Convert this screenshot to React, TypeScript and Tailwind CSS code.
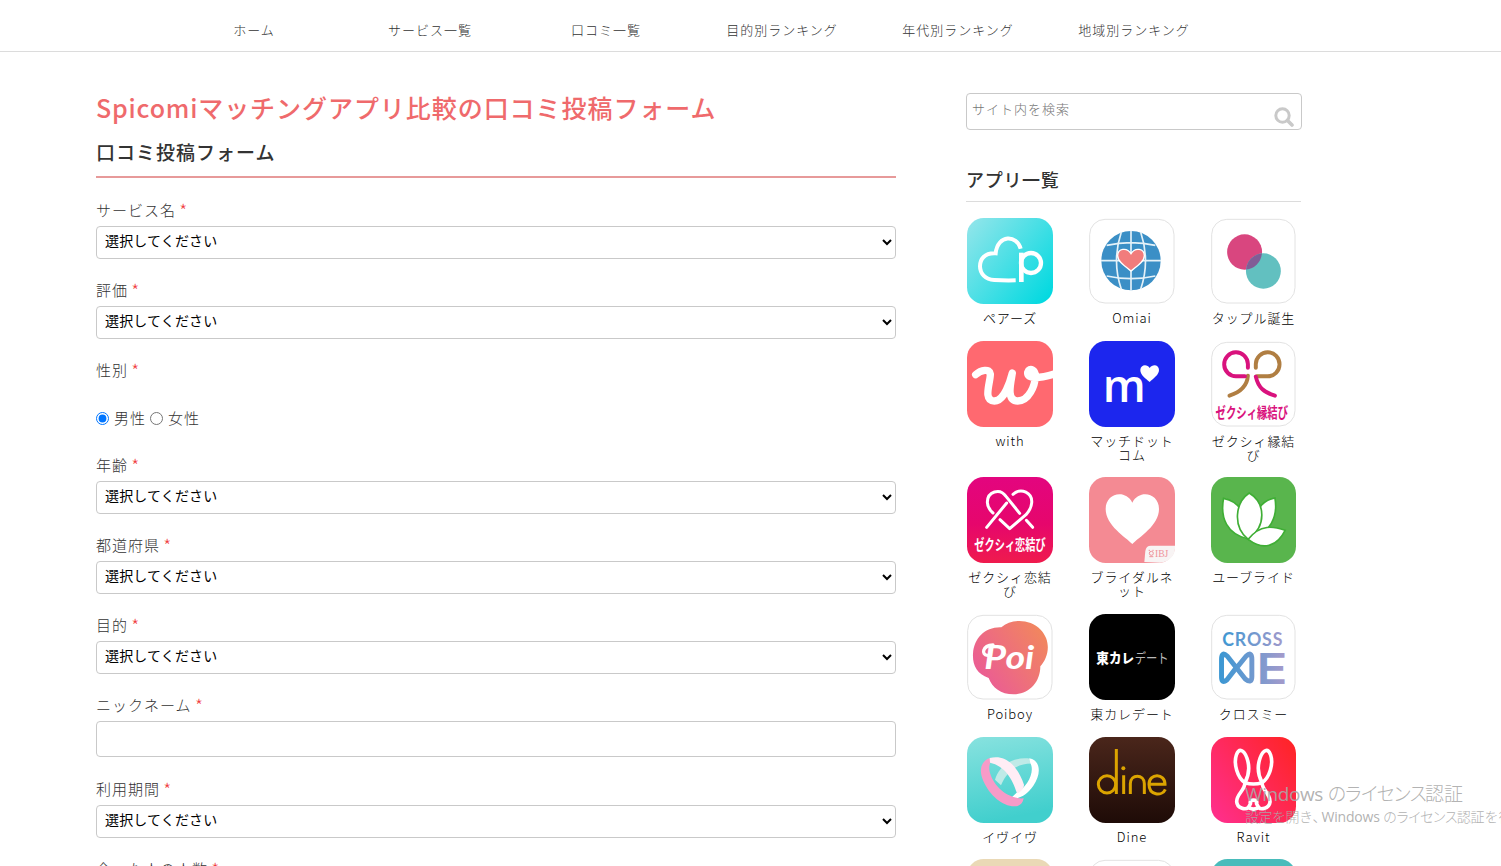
import type { ReactNode } from "react";

const navItems = [
  "ホーム",
  "サービス一覧",
  "口コミ一覧",
  "目的別ランキング",
  "年代別ランキング",
  "地域別ランキング",
];

const JP = "'Noto Sans CJK JP', sans-serif";
const HEART = "M0 34 C-16 22 -40 6 -40 -12 C-40 -34 -12 -38 0 -18 C12 -38 40 -34 40 -12 C40 6 16 22 0 34Z";

/* Each icon is drawn on a 258 x 258 tile. */
function Tile({ children, fill = "#fff", outlined = false }: { children?: ReactNode; fill?: string; outlined?: boolean }) {
  return (
    <svg viewBox="0 0 258 258" preserveAspectRatio="none" className="block h-[86px] w-full" fill="none">
      {outlined ? (
        <rect x="2" y="4" width="253" height="251" rx="46" fill="#fff" stroke="#e2e2e2" strokeWidth="3" />
      ) : (
        <rect width="258" height="258" rx="50" fill={fill} />
      )}
      {children}
    </svg>
  );
}

function Pairs() {
  return (
    <Tile fill="url(#pairs)">
      <defs>
        <linearGradient id="pairs" x1="0" y1="0.1" x2="1" y2="0.9">
          <stop offset="0" stopColor="#8fe5ea" />
          <stop offset="1" stopColor="#00d9e0" />
        </linearGradient>
      </defs>
      <path d="M161 92 C150 50 92 48 86 106 C52 104 39 124 39 145 C39 166 54 184 82 186 Q114 188 146 187" stroke="#fff" strokeWidth="12" />
      <path d="M163 104V192" stroke="#fff" strokeWidth="14" />
      <circle cx="192" cy="135" r="30" stroke="#fff" strokeWidth="13" />
    </Tile>
  );
}

function Omiai() {
  return (
    <Tile outlined>
      <circle cx="126" cy="128" r="89" fill="#3b8fc6" />
      <g stroke="#e4f1f8" strokeWidth="5">
        <path d="M126 38V218M36 128H216M53 82Q126 66 199 82M53 174Q126 190 199 174" />
        <path d="M97 42Q68 128 97 214M155 42Q184 128 155 214" />
      </g>
      <path d={HEART} transform="translate(126 125)" fill="#f17c7c" stroke="#fff" strokeWidth="4" />
    </Tile>
  );
}

function Tapple() {
  return (
    <Tile outlined>
      <circle cx="102" cy="102" r="53" fill="#d9467f" />
      <circle cx="159" cy="159" r="53" fill="#62c0c0" />
      <path d="M106.500 154.500A53 53 0 0 1 154.500 106.500A53 53 0 0 1 106.500 154.500Z" fill="#815c96" />
    </Tile>
  );
}

function With() {
  return (
    <Tile fill="#ff6970">
      <path
        d="M26 101 C42 86 68 82 70 99 C71 122 46 180 82 180 C112 180 130 120 136 96 C132 124 116 180 152 180 C186 180 204 134 205 106 C206 88 188 76 182 94 C180 116 220 112 262 99"
        stroke="#fff"
        strokeWidth="22"
        strokeLinecap="round"
        strokeLinejoin="round"
      />
    </Tile>
  );
}

function Match() {
  return (
    <Tile fill="#1c26ee">
      <text x="41" y="183" textLength="129" lengthAdjust="spacingAndGlyphs" fontFamily="Open Sans" fontWeight="600" fontSize="137" fill="#fff">m</text>
      <path d="M182 123 C170 112 153 101 154 86 C155 70 175 68 182 81 C190 68 210 70 210 87 C210 101 194 112 182 123Z" fill="#fff" />
    </Tile>
  );
}

function ZexyEn() {
  return (
    <Tile outlined>
      <g strokeWidth="12" strokeLinecap="round">
        <path d="M112 104 C110 132 94 152 56 164" stroke="#b07e42" />
        <path d="M136 80V69A36 36 0 1 1 172 106H139" stroke="#b07e42" />
        <path d="M112 80V69A36 36 0 1 0 77 106H103" stroke="#d9127d" />
        <path d="M136 107 C144 142 162 154 194 164" stroke="#d9127d" />
      </g>
      <text x="14" y="232" textLength="220" lengthAdjust="spacingAndGlyphs" fontFamily={JP} fontWeight="700" fontSize="44" fill="#d9127d">ゼクシィ縁結び</text>
    </Tile>
  );
}

function ZexyKoi() {
  return (
    <Tile fill="url(#koi)">
      <defs>
        <linearGradient id="koi" x1="0" y1="0" x2="0" y2="1">
          <stop offset="0" stopColor="#e3057f" />
          <stop offset="0.55" stopColor="#e6066c" />
          <stop offset="1" stopColor="#ef1b4d" />
        </linearGradient>
      </defs>
      <g stroke="#fff" strokeWidth="9" strokeLinecap="round" strokeLinejoin="round">
        <path d="M59 151 L119 78" />
        <path d="M138 52 C163 30 197 48 194 78 C193 92 186 103 177 113 L128 155 L99 128" />
        <path d="M158 109 L117 58 C99 32 61 43 61 76 C61 91 70 101 78 108" />
        <path d="M178 130 L197 151" />
      </g>
      <text x="22" y="219" textLength="214" lengthAdjust="spacingAndGlyphs" fontFamily={JP} fontWeight="700" fontSize="44" fill="#fff">ゼクシィ恋結び</text>
    </Tile>
  );
}

function Bridal() {
  return (
    <Tile fill="#f48a93">
      <path d="M130 201 C110 180 50 146 50 96 C50 48 109 36 130 77 C151 36 210 48 210 96 C210 146 150 180 130 201Z" fill="#fff" />
      <path d="M166 255 L169 222 Q171 206 186 206 H258V215 C257 240 235 256 212 257Z" fill="#f8f4f4" />
      <text x="198" y="239" textLength="40" lengthAdjust="spacingAndGlyphs" fontFamily="Liberation Serif" fontSize="31" fill="#ef929b">IBJ</text>
      <circle cx="187" cy="229" r="6" stroke="#ef929b" strokeWidth="3" />
      <path d="M179 220h4m7 0h4m-13 19h12" stroke="#ef929b" strokeWidth="3" />
    </Tile>
  );
}

function Ubride() {
  return (
    <Tile fill="#59b54d">
      <g fill="#fff" stroke="#3fae35" strokeWidth="5">
        <path d="M112 186 C49 171 27 125 38 64 C84 72 107 104 112 186Z" />
        <path d="M116 187 C135 99 149 72 194 63 C204 118 181 169 116 187Z" />
        <path d="M113 187 C65 149 73 77 116 48 C166 78 169 148 113 187Z" />
        <path d="M113 187 C149 140 191 148 225 160 C200 209 158 221 113 187Z" />
      </g>
    </Tile>
  );
}

function Poiboy() {
  return (
    <Tile outlined>
      <defs>
        <linearGradient id="poi" gradientUnits="userSpaceOnUse" x1="50" y1="190" x2="230" y2="70">
          <stop offset="0" stopColor="#eb5e92" />
          <stop offset="1" stopColor="#f18560" />
        </linearGradient>
      </defs>
      <path d="M103 40 C132 14 188 13 221 47 C255 83 244 132 220 157 C220 205 186 241 140 241 C101 241 76 221 65 192 C29 180 16 153 18 119 C21 72 55 38 103 40Z" fill="url(#poi)" />
      <text x="52" y="164" textLength="150" lengthAdjust="spacingAndGlyphs" fontFamily="Lato" fontStyle="italic" fontWeight="700" fontSize="98" fill="#fff">Poi</text>
      <path d="M61 124 C43 122 45 95 78 93" stroke="#fff" strokeWidth="10" strokeLinecap="round" />
    </Tile>
  );
}

function Tokyo() {
  return (
    <Tile fill="#000">
      <text x="22" y="146" textLength="113" lengthAdjust="spacingAndGlyphs" fontFamily={JP} fontWeight="900" fontSize="40" fill="#fff">東カレ</text>
      <text x="137" y="146" textLength="102" lengthAdjust="spacingAndGlyphs" fontFamily={JP} fontWeight="400" fontSize="40" fill="#b8b8b8">デート</text>
    </Tile>
  );
}

function CrossMe() {
  return (
    <Tile outlined>
      <defs>
        <linearGradient id="cross" gradientUnits="userSpaceOnUse" x1="24" y1="0" x2="226" y2="0">
          <stop offset="0" stopColor="#3997d3" />
          <stop offset="1" stopColor="#a59acb" />
        </linearGradient>
      </defs>
      <text x="34" y="95" textLength="183" lengthAdjust="spacing" fontFamily="Lato" fontWeight="700" fontSize="54" fill="url(#cross)">CROSS</text>
      <path d="M77 161 L48 198 Q32 210 32 190 V136 Q32 111 49 126 L104 195 Q124 210 124 188 V136 Q124 111 107 126 L74 166" stroke="url(#cross)" strokeWidth="15" strokeLinecap="round" strokeLinejoin="round" />
      <text x="138" y="210" textLength="94" lengthAdjust="spacingAndGlyphs" fontFamily="Inter" fontWeight="600" fontSize="129" fill="url(#cross)">E</text>
    </Tile>
  );
}

function Eveeve() {
  return (
    <Tile fill="url(#eve)">
      <defs>
        <linearGradient id="eve" x1="0" y1="0" x2="0.2" y2="1">
          <stop offset="0" stopColor="#88e2df" />
          <stop offset="1" stopColor="#41cfcd" />
        </linearGradient>
      </defs>
      <path d="M84 128 C98 84 136 59 189 65 L203 80 C160 76 122 96 102 145Z" fill="#bfeae7" />
      <path d="M187 64 C222 70 223 112 199 146 C180 173 158 186 128 187 L148 168 C180 151 205 105 190 78Z" fill="#fff" />
      <path d="M68 63 C39 74 36 104 49 132 C69 178 113 214 152 207 C162 204 168 196 170 184 C122 187 76 146 67 100 C66 90 67 83 71 76Z" fill="#f79bc8" />
      <path d="M68 63 C118 50 153 90 171 143 C171 153 162 166 150 169 C136 124 112 86 69 77Z" fill="#ffedf5" />
    </Tile>
  );
}

function Dine() {
  return (
    <Tile fill="url(#dine)">
      <defs>
        <linearGradient id="dine" x1="0" y1="0" x2="0" y2="1">
          <stop offset="0" stopColor="#4a261b" />
          <stop offset="1" stopColor="#1e0b07" />
        </linearGradient>
      </defs>
      <g stroke="#dca400" strokeWidth="9">
        <circle cx="54" cy="142" r="26" />
        <path d="M82 36V171M104 115V171" />
        <path d="M124 171V140C124 110 166 110 166 140V171" />
        <path d="M180 142H228C228 107 180 108 180 142C180 176 219 179 229 157" />
      </g>
      <circle cx="103" cy="94" r="6" fill="#dca400" />
    </Tile>
  );
}

function Ravit() {
  return (
    <Tile fill="url(#ravit)">
      <defs>
        <linearGradient id="ravit" x1="0" y1="0.8" x2="1" y2="0.1">
          <stop offset="0" stopColor="#ff2e87" />
          <stop offset="1" stopColor="#ff2427" />
        </linearGradient>
      </defs>
      <g stroke="#fff" strokeWidth="11" strokeLinejoin="round">
        <path d="M103 137 C80 122 68 80 77 54 C85 32 100 38 109 63 C118 88 116 113 103 137Z" />
        <path d="M155 137 C178 122 190 80 181 54 C173 32 158 38 149 63 C140 88 142 113 155 137Z" />
        <path d="M103 137 Q129 145 155 137 C155 160 182 172 179 196 C176 217 150 217 145 212 L129 217 L113 212 C104 219 79 214 78 194 C77 172 103 160 103 137Z" />
        <path d="M113 212 L120 200 C113 186 145 186 138 200 L145 212" />
      </g>
    </Tile>
  );
}

const apps: { name: string; icon: ReactNode }[] = [
  { name: "ペアーズ", icon: <Pairs /> },
  { name: "Omiai", icon: <Omiai /> },
  { name: "タップル誕生", icon: <Tapple /> },
  { name: "with", icon: <With /> },
  { name: "マッチドットコム", icon: <Match /> },
  { name: "ゼクシィ縁結び", icon: <ZexyEn /> },
  { name: "ゼクシィ恋結び", icon: <ZexyKoi /> },
  { name: "ブライダルネット", icon: <Bridal /> },
  { name: "ユーブライド", icon: <Ubride /> },
  { name: "Poiboy", icon: <Poiboy /> },
  { name: "東カレデート", icon: <Tokyo /> },
  { name: "クロスミー", icon: <CrossMe /> },
  { name: "イヴイヴ", icon: <Eveeve /> },
  { name: "Dine", icon: <Dine /> },
  { name: "Ravit", icon: <Ravit /> },
  { name: "", icon: <Tile fill="#ead9b6" /> },
  { name: "", icon: <Tile outlined /> },
  { name: "", icon: <Tile fill="#49bcbb" /> },
];

function Label({ children }: { children: ReactNode }) {
  return (
    <div className="h-6 text-[15px] leading-6 tracking-[1px] whitespace-nowrap">
      {children} <span className="-ml-px inline-block w-2 align-[-2px] text-[18px] leading-none text-[#f03c3c]">*</span>
    </div>
  );
}

function SelectField({ label }: { label: string }) {
  return (
    <div className="mb-[19px] flex flex-col gap-1">
      <Label>{label}</Label>
      <select className="h-[33px] w-full rounded-[4px] border border-[#c9c9c9] bg-white px-1 pb-[5px] text-[14px] font-normal tracking-[0.150px] text-black">
        <option>選択してください</option>
      </select>
    </div>
  );
}

export default function App() {
  return (
    <div className="relative h-[866px] w-[1501px] overflow-hidden bg-white font-['Noto_Sans_CJK_JP',sans-serif] font-light text-[#333]">
      <header className="h-[52px] border-b border-[#dcdcdc]">
        <nav className="ml-[166px] flex pt-5">
          {navItems.map((item) => (
            <a key={item} className="w-44 text-center text-[13px] leading-5 tracking-[1px]">
              {item}
            </a>
          ))}
        </nav>
      </header>

      <div className="flex pl-24">
        <main className="w-[800px]">
          <h1 className="mt-[35px] mb-px h-10 text-[25px] leading-10 font-medium tracking-[0.95px] whitespace-nowrap text-[#ef6a6c]">
            <span className="tracking-[0.800px]">Spicomi</span>マッチングアプリ比較の口コミ投稿フォーム
          </h1>
          <h2 className="mb-5 h-[50px] border-b-2 border-[#e79a9a] pt-[9px] text-[19px] leading-[30px] font-medium tracking-[1px]">
            口コミ投稿フォーム
          </h2>
          <SelectField label="サービス名" />
          <SelectField label="評価" />
          <div className="flex h-[95px] flex-col gap-6">
            <Label>性別</Label>
            <div className="flex h-6 items-center text-[15px] tracking-[1px]">
              <input type="radio" name="gender" defaultChecked className="mr-[5px] h-[13px] w-[13px]" />
              男性
              <input type="radio" name="gender" className="mr-[5px] ml-1 h-[13px] w-[13px]" />
              女性
            </div>
          </div>
          <SelectField label="年齢" />
          <SelectField label="都道府県" />
          <SelectField label="目的" />
          <div className="mb-5 flex flex-col gap-1">
            <Label>ニックネーム</Label>
            <input className="h-9 w-full rounded-[4px] border border-[#c9c9c9] px-2 text-[14px]" />
          </div>
          <SelectField label="利用期間" />
          <SelectField label="会った人の人数" />
        </main>

        <aside className="ml-[70px] w-[336px] pt-[41px]">
          <div className="flex h-[37px] justify-between rounded-[4px] border border-[#c9c9c9] pr-[7px] pl-[5px]">
            <input
              placeholder="サイト内を検索"
              className="h-7 w-60 text-[13px] tracking-[1px] placeholder:text-[#757575]"
            />
            <svg viewBox="0 0 20 20" className="mt-[13px] h-5 w-5" fill="none" stroke="#c9c9c9">
              <circle cx="8.500" cy="8.500" r="6.700" strokeWidth="3" />
              <path d="M13.500 13.500L18 18" strokeWidth="3.600" strokeLinecap="round" />
            </svg>
          </div>
          <h3 className="mt-9 h-9 w-[335px] border-b border-[#dcdcdc] text-[18px] leading-[26px] font-medium tracking-[0.7px]">
            アプリ一覧
          </h3>
          <div className="mt-4 ml-px grid grid-cols-[86px_86px_85px] gap-x-9 gap-y-[14.700px]">
            {apps.map((app, i) => (
              <div key={i} className="flex flex-col items-center gap-[7px]">
                {app.icon}
                <div className="mb-px w-[87px] text-center text-[13px] leading-[14px] tracking-[0.900px] break-all text-black">
                  {app.name}
                </div>
              </div>
            ))}
          </div>
        </aside>
      </div>

      <div className="absolute top-[780px] left-[1245px] font-['Open_Sans','Noto_Sans_CJK_JP',sans-serif] whitespace-nowrap text-[#a9a9a9]/90">
        <div className="text-[19px] leading-7">
          <span className="font-normal tracking-[-0.400px]">Windows </span>
          <span className="tracking-[-2.700px]">のライセンス</span>
          <span className="tracking-normal">認証</span>
        </div>
        <div className="text-[14px] leading-[18px]">
          <span className="tracking-[-0.500px]">設定を開き</span>
          <span className="tracking-[-5px]">、</span>
          <span className="font-normal tracking-[-0.200px]">Windows </span>
          <span className="tracking-[-1.700px]">のライセンス</span>
          <span>認証を行ってください。</span>
        </div>
      </div>
    </div>
  );
}
